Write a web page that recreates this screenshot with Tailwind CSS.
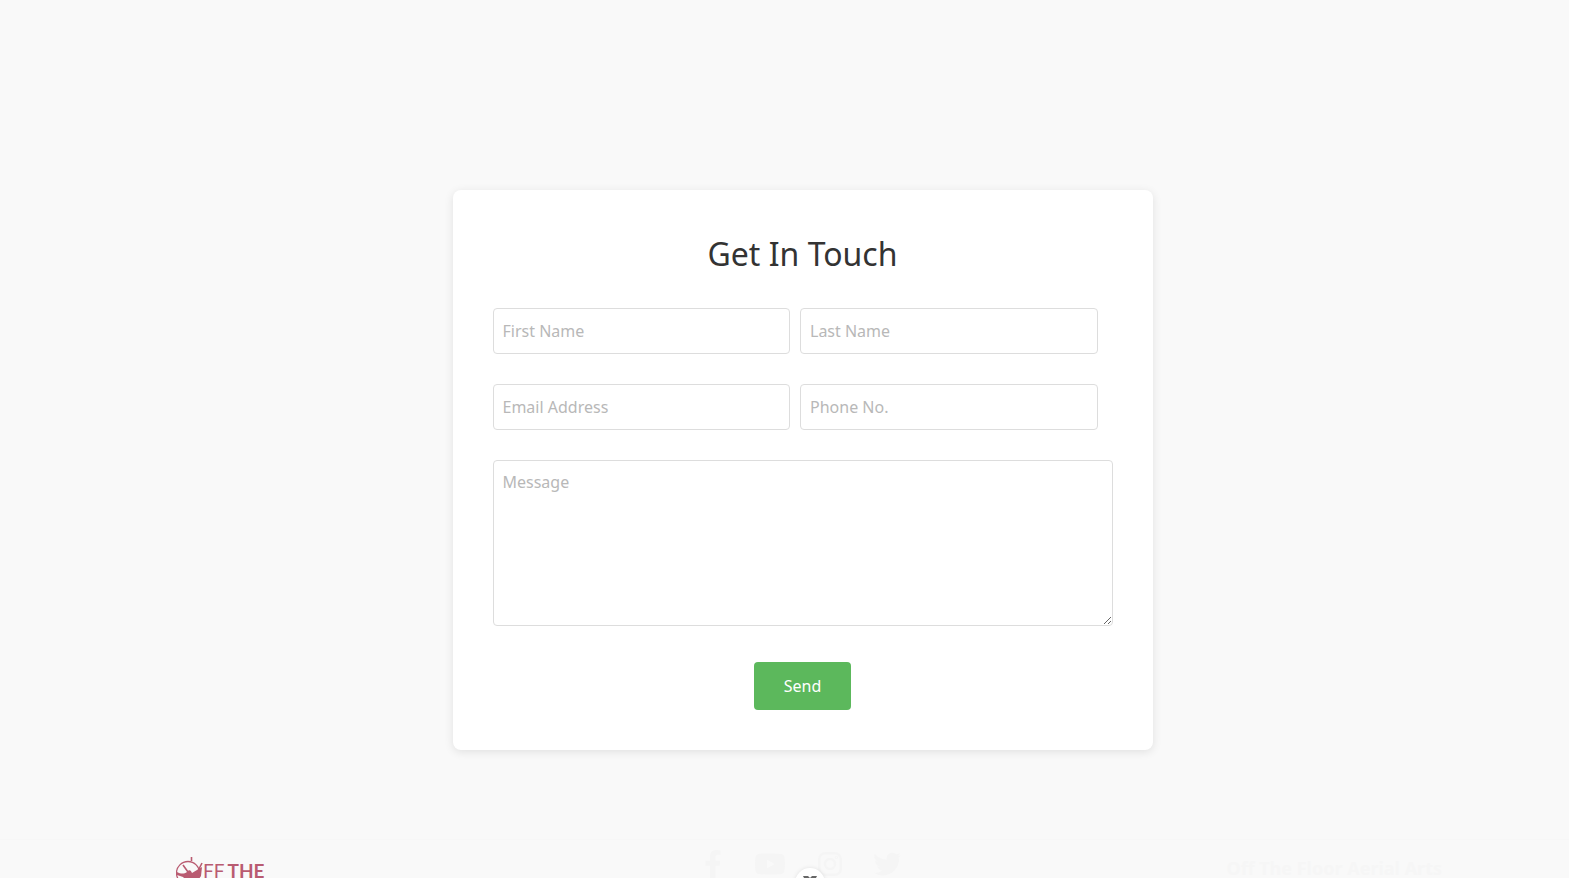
<!DOCTYPE html>
<html lang="en">
<head>
<meta charset="utf-8">
<title>Get In Touch</title>
<script src="https://cdn.jsdelivr.net/npm/@tailwindcss/browser@4"></script>
</head>
<body class="h-screen overflow-hidden bg-[#f9f9f9] font-['Noto_Sans',sans-serif] text-base text-[#333]">
<main class="pt-[190px] pb-[89px] pl-9">
  <form class="mx-auto flex max-w-[700px] flex-col rounded-lg bg-white p-10 shadow-[0_2px_10px_rgba(0,0,0,0.1)]">
    <h1 class="mb-[30px] text-center text-[32px] leading-12">Get In Touch</h1>
    <div class="mr-[15px] grid grid-cols-2 gap-x-[10px] gap-y-[30px]">
      <input type="text" aria-label="First Name" placeholder="First Name" class="h-[46px] min-w-0 rounded border border-[#ddd] bg-white px-[9px] placeholder:text-[#b8b8b8]">
      <input type="text" aria-label="Last Name" placeholder="Last Name" class="h-[46px] min-w-0 rounded border border-[#ddd] bg-white px-[9px] placeholder:text-[#b8b8b8]">
      <input type="email" aria-label="Email Address" placeholder="Email Address" class="h-[46px] min-w-0 rounded border border-[#ddd] bg-white px-[9px] placeholder:text-[#b8b8b8]">
      <input type="tel" aria-label="Phone No." placeholder="Phone No." class="h-[46px] min-w-0 rounded border border-[#ddd] bg-white px-[9px] placeholder:text-[#b8b8b8]">
    </div>
    <textarea aria-label="Message" placeholder="Message" class="mt-[30px] h-[166px] resize rounded border border-[#ddd] bg-white px-[9px] py-[10px] leading-[22px] placeholder:text-[#b8b8b8]"></textarea>
    <button type="submit" class="mx-auto mt-9 h-12 rounded bg-[#5cb85c] px-[30px] text-white">Send</button>
  </form>
</main>
<footer class="relative grid grid-cols-3 border-t border-[#f7f7f7] pl-9">
  <a href="#" aria-label="Off The Floor" class="mt-[17px] ml-[140px] flex items-start text-[#b95b71]">
    <svg class="h-7 w-[27px]" viewBox="0 0 27 28" fill="none" stroke="currentColor" stroke-width="1.3">
      <circle cx="12" cy="16" r="11.5"/>
      <path d="M15.5 0v4" stroke-width="1.6"/>
      <path d="M7 8l5 7M26 6l-4 8" stroke-width="1.6"/>
      <path d="M1 15c4 2 7 2 10 0 2-3 4-2 5 1l5-3 5-3-1 9-5 7-8-1-5-5-6-2z" fill="currentColor" stroke="none"/>
    </svg>
    <span class="flex gap-[3px] pt-1 font-[Lato,sans-serif] text-[19px] leading-5"><span>FF</span><span class="font-bold">THE</span></span>
  </a>
  <nav aria-label="Social links" class="mt-[10px] flex items-center justify-center gap-8 self-start text-[#f5f5f5]">
    <a href="#" aria-label="Facebook"><svg class="h-7 w-[18px]" viewBox="0 0 320 512" fill="currentColor"><path d="M279 288l14-93h-89v-60c0-25 12-50 52-50h41V7S260 0 225 0c-73 0-121 44-121 125v70H23v93h81v224h100V288z"/></svg></a>
    <a href="#" aria-label="YouTube"><svg class="h-7 w-8" viewBox="0 0 576 512" fill="currentColor"><path d="M550 124c-6-24-25-42-49-49-42-11-213-11-213-11S117 64 75 75c-24 7-43 25-49 49-11 43-11 132-11 132s0 90 11 133c6 23 25 41 49 48 42 11 213 11 213 11s171 0 213-11c24-7 43-25 49-48 11-43 11-133 11-133s0-89-11-132zM232 338V175l143 81z"/></svg></a>
    <a href="#" aria-label="Instagram"><svg class="h-7 w-6" viewBox="0 0 24 28" fill="none" stroke="currentColor" stroke-width="2.4"><rect x="1.2" y="3.2" width="21.6" height="21.6" rx="6"/><circle cx="12" cy="14" r="5"/><circle cx="18.4" cy="7.6" r=".4"/></svg></a>
    <a href="#" aria-label="Twitter"><svg class="h-7 w-7" viewBox="0 0 512 512" fill="currentColor"><path d="M459 152v14c0 138-105 298-298 298-59 0-114-17-161-47a213 213 0 0 0 155-43c-46-1-84-31-98-73 16 3 32 2 48-2-48-10-84-52-84-103v-1c14 8 30 13 47 13A105 105 0 0 1 14 68c52 64 130 105 217 110-15-73 39-130 102-130 30 0 57 13 76 33 24-5 46-13 67-25-8 24-24 45-46 58 21-2 42-8 60-16-14 21-32 39-52 54z"/></svg></a>
  </nav>
  <h2 class="mt-3 mr-[127px] text-right text-[18px] leading-8 font-bold whitespace-nowrap text-[#f6f6f6]">Off The Floor Aerial Arts</h2>
  <button type="button" aria-label="Close" class="absolute top-7 left-1/2 ml-[10px] grid size-[30px] justify-items-center rounded-full bg-white pt-2 shadow-[0_0_4px_rgba(0,0,0,0.1)]">
    <svg class="h-3 w-[14px]" viewBox="0 0 14 12" fill="#666"><path d="M0 0h5l2 2 2-2h5l-1 2-4 3 3 5-4-3H6l-4 3 3-5-4-3z"/></svg>
  </button>
</footer>
</body>
</html>
